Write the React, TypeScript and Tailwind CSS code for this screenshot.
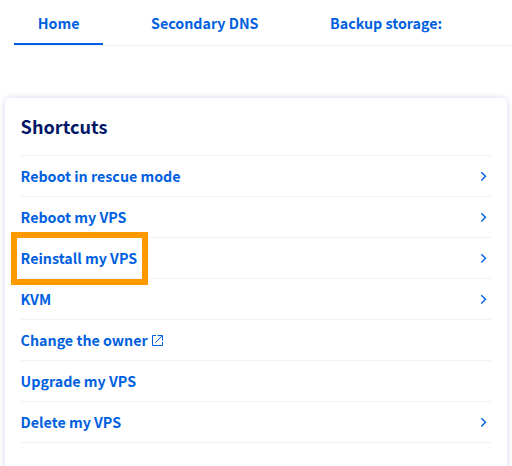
const shortcuts = [
  { label: 'Reboot in rescue mode', chevron: true },
  { label: 'Reboot my VPS', chevron: true },
  { label: 'Reinstall my VPS', chevron: true, highlighted: true },
  { label: 'KVM', chevron: true },
  { label: 'Change the owner', external: true },
  { label: 'Upgrade my VPS' },
  { label: 'Delete my VPS', chevron: true },
];

function Chevron() {
  return (
    <svg className="mr-[3px] h-[11px] w-2" viewBox="0 0 8 11" fill="none" stroke="currentColor" strokeWidth="1.4">
      <path d="M1.3 1.2 5.5 5.3 1.3 9.4" />
    </svg>
  );
}

function ExternalLink() {
  return (
    <svg className="h-[11px] w-[11px]" viewBox="0 0 11 11" fill="none" stroke="currentColor">
      <path d="M4 .5H.5v10h10V7M5.5.5h5v5M10.3.7 3.3 7.7" />
    </svg>
  );
}

export default function App() {
  return (
    <div className="h-[466px] w-[512px] overflow-hidden bg-white font-['Noto_Sans_CJK_SC',sans-serif] text-[14.25px] font-bold whitespace-nowrap text-[#0060e0]">
      <nav className="ml-[14px] flex h-[46px] border-b border-[#e6f3fc]">
        <a className="h-[45px] w-[89px] border-b-2 border-[#0060e0] pl-[23.7px] leading-[45px]">Home</a>
        <a className="ml-12 w-[131px] leading-[45px]">Secondary DNS</a>
        <a className="ml-12 leading-[45px]">Backup storage:</a>
      </nav>
      <section className="mt-[52px] ml-[5px] h-[400px] w-[502px] rounded-md bg-white px-4 shadow-[0_0_6px_rgba(0,14,156,0.18)]">
        <h2 className="-ml-[0.4px] h-[57px] text-[18.1px] leading-[56px] text-[#001666]">Shortcuts</h2>
        <ul className="w-[470px] border-t border-[#f2f2f2]">
          {shortcuts.map((item) => (
            <li key={item.label} className="relative flex h-[41px] items-center border-b border-[#f2f2f2]">
              <a className={item.external ? '-ml-[0.4px] w-[131.4px]' : '-ml-[0.4px]'}>{item.label}</a>
              {item.external && <ExternalLink />}
              {item.chevron && <span className="ml-auto"><Chevron /></span>}
              {item.highlighted && (
                <span className="absolute -top-[6px] -left-[10px] h-[53px] w-[137px] border-6 border-[#ff9900]" />
              )}
            </li>
          ))}
        </ul>
      </section>
    </div>
  );
}
